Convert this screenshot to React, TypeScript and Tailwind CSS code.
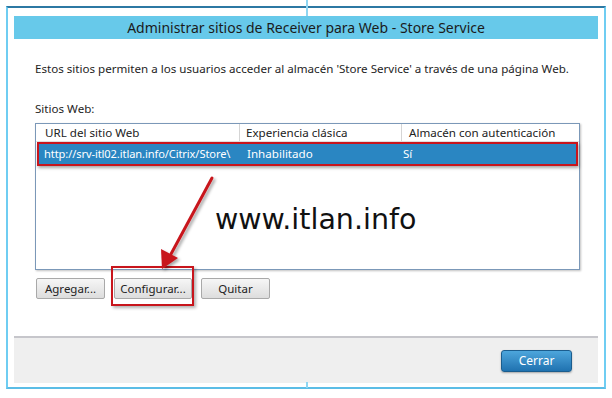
import React from "react";

const ui = { fontFamily: '"Noto Sans", "Open Sans", sans-serif' };

function Btn({ label, w }: { label: string; w: string }) {
  return (
    <div
      className={`${w} h-[21px] flex items-center justify-center rounded-[2px] border border-[#a9a9a9] bg-gradient-to-b from-[#f6f6f6] to-[#dddddd] text-[11.5px] text-[#222]`}
    >
      {label}
    </div>
  );
}

export default function App() {
  return (
    <div className="relative w-[612px] h-[398px] bg-white overflow-hidden px-[6px] pt-[6px] pb-[9px]" style={ui}>
      <div className="h-full flex flex-col border-x-2 border-x-[#6fcdf2] border-t-2 border-t-[#2c78a3] border-b-2 border-b-[#5bbde6] px-[6px] pt-[8px] pb-[4px] bg-white">
        <div className="h-[23px] shrink-0 bg-[#67c9ea] flex items-center justify-center text-[14px] text-[#1b1b1b]">
          Administrar sitios de Receiver para Web - Store Service
        </div>
        <div className="flex-1 flex flex-col pl-[21px] pr-[18px] text-[11.6px] text-[#1e1e1e]">
          <div className="mt-[22px] h-[16px] leading-[16px] whitespace-nowrap">
            Estos sitios permiten a los usuarios acceder al almacén 'Store Service' a través de una página Web.
          </div>
          <div className="mt-[24px] h-[16px] leading-[16px]">Sitios Web:</div>
          <div className="mt-[6px] h-[147px] border border-[#7b98b8] bg-white shadow-[1px_1px_2px_rgba(0,0,0,0.25)] flex flex-col">
            <div className="h-[18px] shrink-0 flex border-b border-[#e2e2e2] text-[#222]">
              <div className="w-[204px] pl-[9px] border-r border-[#d5d5d5] leading-[17px]">URL del sitio Web</div>
              <div className="w-[162px] pl-[6px] border-r border-[#d5d5d5] leading-[17px]">Experiencia clásica</div>
              <div className="flex-1 pl-[7px] leading-[17px]">Almacén con autenticación</div>
            </div>
            <div className="h-[24px] shrink-0 mx-[1px] flex items-center bg-[#2a86c2] text-white border-2 border-[#c8151c] shadow-[1px_2px_3px_rgba(0,0,0,0.35)]">
              <div className="w-[194px] pl-[5px] whitespace-nowrap text-[11.1px] tracking-[-0.1px]">http://srv-itl02.itlan.info/Citrix/Store\</div>
              <div className="w-[162px] pl-[14px]">Inhabilitado</div>
              <div className="flex-1 pl-[8px]">Sí</div>
            </div>
          </div>
          <div className="mt-[8px] flex gap-[9px] pl-[1px]">
            <Btn label="Agregar..." w="w-[69px]" />
            <Btn label="Configurar..." w="w-[78px]" />
            <Btn label="Quitar" w="w-[69px]" />
          </div>
        </div>
        <div className="h-[47px] shrink-0 bg-[#efefef] border-t-2 border-t-[#c6c6cb] flex items-center justify-end pr-[26px]">
          <div className="w-[71px] h-[22px] rounded-[3px] border border-[#1b5d8e] bg-gradient-to-b from-[#4da6dc] to-[#1f72b0] shadow-[0_1px_2px_rgba(0,0,0,0.3)] flex items-center justify-center text-[12px] text-white">
            Cerrar
          </div>
        </div>
      </div>

      {/* watermark */}
      <div
        className="absolute left-[215px] top-[203px] text-[28.5px] leading-[34px] text-[#111]"
        style={{ fontFamily: '"DejaVu Sans", sans-serif' }}
      >
        www.itlan.info
      </div>

      {/* red highlight box around Configurar */}
      <div className="absolute left-[111px] top-[266px] w-[83px] h-[40px] border-2 border-[#c8151c] shadow-[2px_2px_3px_rgba(0,0,0,0.3)]" />

      {/* arrow */}
      <svg className="absolute left-0 top-0" width="612" height="398" viewBox="0 0 612 398">
        <defs>
          <filter id="sh" x="-20%" y="-20%" width="140%" height="140%">
            <feDropShadow dx="2" dy="2" stdDeviation="1.5" floodColor="#000" floodOpacity="0.35" />
          </filter>
        </defs>
        <g filter="url(#sh)">
          <line x1="212" y1="178" x2="171" y2="254" stroke="#c8151c" strokeWidth="3" strokeLinecap="round" />
          <polygon points="162,269 161,249 178,258" fill="#c8151c" />
        </g>
      </svg>

      {/* small screen artifacts */}
      <div className="absolute left-[306px] top-0 w-[2px] h-[16px] bg-[#8fd6f2]" />
      <div className="absolute left-[306px] top-[382px] w-[2px] h-[6px] bg-[#8fd6f2]" />
    </div>
  );
}
